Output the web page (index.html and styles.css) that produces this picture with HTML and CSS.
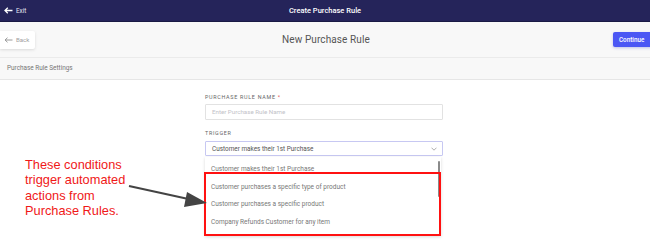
FILE: index.html
```html
<!DOCTYPE html>
<html>
<head>
<meta charset="utf-8">
<link rel="stylesheet" href="styles.css">
</head>
<body>
<div class="page">
  <header class="topbar">
    <div class="exit">
      <svg width="9" height="7" viewBox="0 0 9 7"><path d="M8.5 3.5H1.2M3.8 0.8L1 3.5l2.8 2.7" fill="none" stroke="#fff" stroke-width="1.3"/></svg>
      <span>Exit</span>
    </div>
    <div class="topbar-title">Create Purchase Rule</div>
    <div></div>
  </header>
  <div class="subheader">
    <div class="back">
      <svg width="9" height="6" viewBox="0 0 9 6"><path d="M8.5 3H1.2M3.5 0.7L1 3l2.5 2.3" fill="none" stroke="#9a9a9a" stroke-width="1"/></svg>
      <span>Back</span>
    </div>
    <div class="page-title">New Purchase Rule</div>
    <div class="continue-wrap"><button class="continue">Continue</button></div>
  </div>
  <div class="section-bar">Purchase Rule Settings</div>
  <main class="content">
    <div class="form">
      <label class="label">PURCHASE RULE NAME <span class="req">*</span></label>
      <div class="input">Enter Purchase Rule Name</div>
      <label class="label trigger-label">TRIGGER</label>
      <div class="select">
        <span>Customer makes their 1st Purchase</span>
        <svg width="6" height="4" viewBox="0 0 6 4"><path d="M0.5 0.7L3 3.2 5.5 0.7" fill="none" stroke="#999" stroke-width="0.8"/></svg>
      </div>
      <div class="dropdown">
        <div class="option">Customer makes their 1st Purchase</div>
        <div class="option">Customer purchases a specific type of product</div>
        <div class="option">Customer purchases a specific product</div>
        <div class="option">Company Refunds Customer for any item</div>
        <div class="scrollbar"></div>
      </div>
    </div>
    <div class="highlight"></div>
    <div class="note">These conditions trigger automated actions from Purchase Rules.</div>
    <svg class="arrow" width="90" height="30" viewBox="0 0 90 30">
      <line x1="2" y1="3" x2="66" y2="17" stroke="#444" stroke-width="2.2"/>
      <polygon points="80,20 60,9 57,24" fill="#444"/>
    </svg>
  </main>
</div>
</body>
</html>
```
FILE: styles.css
```css
* { box-sizing: border-box; }
html, body { margin: 0; padding: 0; }
body {
  width: 650px;
  height: 251px;
  overflow: hidden;
  background: #fff;
  font-family: Roboto, "Liberation Sans", sans-serif;
}
.page { position: relative; }

.topbar {
  height: 22px;
  background: #25245a;
  border-bottom: 1px solid #1a1a45;
  display: grid;
  grid-template-columns: 1fr auto 1fr;
  align-items: center;
  color: #fff;
}
.exit {
  display: flex;
  align-items: center;
  gap: 3px;
  padding-left: 4px;
  font-size: 6.3px;
  color: #e8e8f2;
}
.topbar-title {
  font-size: 7.5px;
  font-weight: 500;
  color: #fff;
}

.subheader {
  height: 35px;
  background: #f8f8f8;
  display: grid;
  grid-template-columns: 1fr auto 1fr;
  align-items: center;
}
.back {
  justify-self: start;
  width: 35px;
  height: 18px;
  background: #fff;
  box-shadow: 0 1px 3px rgba(0,0,0,0.12);
  display: flex;
  align-items: center;
  gap: 3px;
  padding-left: 4px;
  font-size: 6.1px;
  color: #a0a0a0;
  border-radius: 0 2px 2px 0;
}
.page-title {
  font-size: 10px;
  color: #555;
  letter-spacing: 0.1px;
  padding-left: 2px;
}
.continue-wrap { display: flex; justify-content: flex-end; }
.continue {
  width: 40px;
  height: 15px;
  margin-right: -3px;
  border: none;
  border-radius: 2px;
  background: #4b57f4;
  color: #fff;
  font-family: inherit;
  font-size: 6.3px;
  font-weight: 500;
  text-align: left;
  padding: 0 0 0 6px;
  box-shadow: 0 1px 3px rgba(60,70,200,0.3);
}

.section-bar {
  height: 23px;
  background: #f8f8f8;
  border-top: 1px solid #ebebeb;
  border-bottom: 1px solid #e6e6e6;
  font-size: 6.4px;
  color: #777;
  padding-left: 7px;
  display: flex;
  align-items: center;
  padding-bottom: 1px;
}

.content {
  position: relative;
  height: 171px;
  padding-top: 14px;
}
.form {
  width: 238px;
  margin-left: 205px;
  position: relative;
}
.label {
  display: block;
  font-size: 5.4px;
  letter-spacing: 0.7px;
  color: #666;
  line-height: 7px;
  margin-bottom: 3px;
}
.req { color: #e25555; }
.input {
  height: 16px;
  border: 1px solid #e2e2e2;
  border-radius: 1px;
  font-size: 6.2px;
  color: #c2c2c8;
  padding-left: 6px;
  display: flex;
  align-items: center;
}
.trigger-label { margin-top: 10px; margin-bottom: 4px; }
.select {
  height: 15px;
  border: 1px solid #c7c8f2;
  border-radius: 1px;
  font-size: 6.4px;
  color: #555;
  padding: 0 5px 0 6px;
  display: flex;
  align-items: center;
  justify-content: space-between;
}
.dropdown {
  position: relative;
  margin-top: 1px;
  width: 236px;
  background: #fff;
  box-shadow: 0 1px 3px rgba(0,0,0,0.15);
  padding-top: 3px;
  padding-bottom: 5px;
}
.option {
  height: 17.7px;
  display: flex;
  align-items: center;
  padding-left: 6px;
  font-size: 6.5px;
  color: #777;
}
.scrollbar {
  position: absolute;
  right: 1px;
  top: 4px;
  width: 2px;
  height: 36px;
  background: #8a8a8a;
  border-radius: 1px;
}

.highlight {
  position: absolute;
  left: 204px;
  top: 92px;
  width: 237px;
  height: 64px;
  border: 2.5px solid #ff1111;
}
.note {
  position: absolute;
  left: 25px;
  top: 77px;
  width: 110px;
  font-family: "Liberation Sans", Arial, sans-serif;
  font-size: 12.8px;
  line-height: 15.3px;
  color: #f01818;
}
.arrow {
  position: absolute;
  left: 127px;
  top: 103px;
}
```
